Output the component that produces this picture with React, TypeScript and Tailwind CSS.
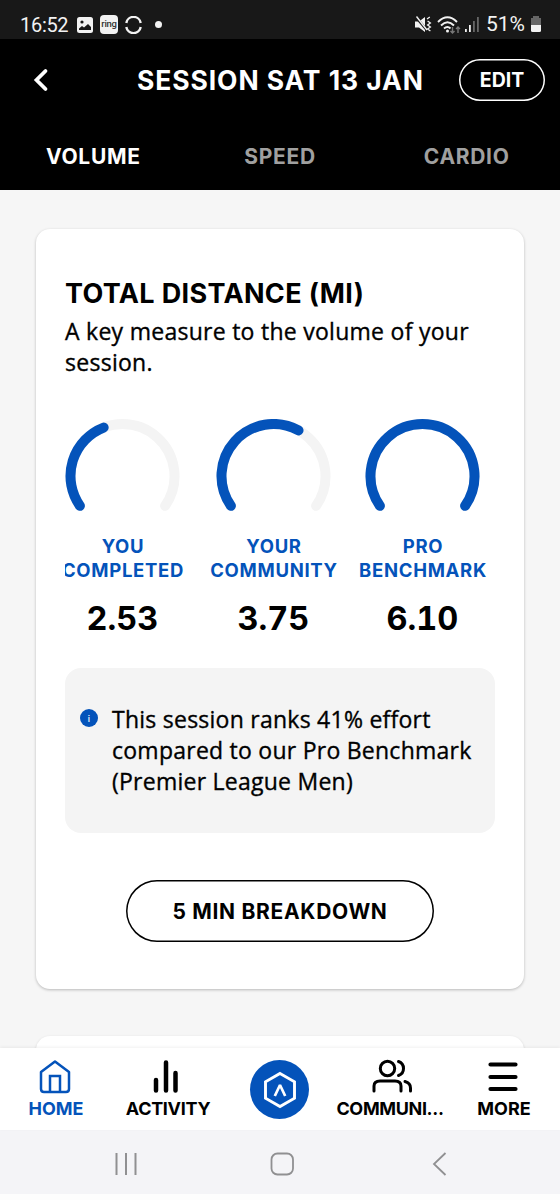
import type { ReactNode } from "react";

type GaugeProps = {
  label: [string, string];
  value: string;
  ratio: number;
  className?: string;
};

const RADIUS = 52;
const SWEEP = 250;
const START = 215;

function polar(deg: number) {
  const rad = (deg * Math.PI) / 180;
  return `${57.5 + RADIUS * Math.cos(rad)} ${57 - RADIUS * Math.sin(rad)}`;
}

function arc(ratio: number) {
  const sweep = SWEEP * ratio;
  const large = sweep > 180 ? 1 : 0;
  return `M${polar(START)} A${RADIUS} ${RADIUS} 0 ${large} 1 ${polar(START - sweep)}`;
}

function Gauge({ label, value, ratio, className = "" }: GaugeProps) {
  return (
    <div className={`flex w-[115px] shrink-0 flex-col items-center ${className}`}>
      <svg width="115" height="94" viewBox="0 0 115 94" fill="none" strokeWidth="10" strokeLinecap="round">
        <path d={arc(1)} stroke="#f4f4f4" />
        <path d={arc(ratio)} stroke="#0453ba" />
      </svg>
      <div className="mt-[21px] flex flex-col items-center pl-px text-[18.500px] leading-6 font-bold tracking-[0.7px] whitespace-nowrap text-[#0453ba]">
        <span>{label[0]}</span>
        <span>{label[1]}</span>
      </div>
      <div className="mt-[17px] text-[32.500px] leading-10 font-bold tabular-nums">{value}</div>
    </div>
  );
}

function StatusBar() {
  return (
    <div className="flex h-[39px] items-center bg-[#181818] pt-[10px] pl-[20px] font-['Roboto',sans-serif] text-[20px] leading-none text-[#f2f2f2]">
      <span className="w-[57px] tracking-[-0.3px]">16:52</span>
      <svg width="16" height="16" viewBox="0 0 16 16">
        <rect width="16" height="16" rx="2.5" fill="#f2f2f2" />
        <circle cx="5" cy="5" r="1.6" fill="#181818" />
        <path d="M2 13V11.500L5 9L7 10.500L11 7L14 10V13Z" fill="#181818" />
      </svg>
      <div className="ml-[7px] flex h-[19px] w-[18px] items-center justify-center rounded bg-[#f2f2f2] pb-px text-[9.500px] font-medium tracking-[-0.3px] text-[#333]">
        ring
      </div>
      <svg className="ml-[7px]" width="17" height="18" viewBox="0 0 17 18" fill="none" stroke="#f2f2f2" strokeWidth="2.4">
        <path d="M1.300 7A7.300 7.300 0 0 1 15.700 7" />
        <path d="M1.300 11A7.300 7.300 0 0 0 15.700 11" />
      </svg>
      <span className="ml-[13px] size-[7px] rounded-full bg-[#f2f2f2]" />

      <svg className="ml-[253px]" width="17" height="17" viewBox="0 0 17 17" fill="none">
        <path d="M0 5.500H4L10 1V16L4 11.500H0Z" fill="#f2f2f2" />
        <path d="M0.500 0.500L12.500 15" stroke="#181818" strokeWidth="2.6" />
        <path d="M1.500 0.500L12 14" stroke="#f2f2f2" strokeWidth="1.4" />
        <path d="M12 3L14.800 1M12.600 5L15.400 7L12.600 9L15.400 11L12.600 13L15.400 15" stroke="#f2f2f2" strokeWidth="1.3" />
      </svg>
      <svg className="ml-[5px]" width="25" height="18" viewBox="0 0 25 18" fill="none">
        <path d="M1 6Q10.500 -3.500 20 6M4 9.500Q10.500 3 17 9.500M7 12.500Q10.500 9.500 13.500 12.500" stroke="#f2f2f2" strokeWidth="1.9" />
        <circle cx="10.500" cy="15" r="1.5" fill="#f2f2f2" />
        <path d="M15.500 11V17M13.500 15L15.500 17L17.500 15M21 17V11M19 13L21 11L23 13" stroke="#777" strokeWidth="1.4" />
      </svg>
      <svg className="ml-[2px]" width="17" height="17" viewBox="0 0 17 17">
        <rect x="1" y="13" width="1.8" height="3" fill="#f2f2f2" />
        <rect x="5" y="9" width="1.8" height="7" fill="#f2f2f2" />
        <rect x="9" y="5" width="1.8" height="11" fill="#666" />
        <rect x="13" y="1" width="1.8" height="15" fill="#666" />
      </svg>
      <span className="ml-[5px] w-[44px] text-[21px]">51%</span>
      <svg width="12" height="17" viewBox="0 0 12 17">
        <path d="M3 0H9V2H11V9H1V2H3Z" fill="#666" />
        <path d="M1 9H11V14.500Q11 16 9.500 16H2.500Q1 16 1 14.500Z" fill="#f2f2f2" />
      </svg>
    </div>
  );
}

function NavItem({ label, children, className = "" }: { label: string; children: ReactNode; className?: string }) {
  return (
    <div className={`flex flex-col items-center ${className}`}>
      <div className="flex h-[35px] items-end">{children}</div>
      <span className="mt-[3px] text-[18px] leading-6 font-bold whitespace-nowrap">{label}</span>
    </div>
  );
}

function BottomNav() {
  return (
    <nav className="relative grid h-[82px] grid-cols-5 bg-white pt-[11px] shadow-[0_-1px_3px_rgba(0,0,0,0.06)]">
      <NavItem label="HOME" className="text-[#0453ba]">
        <svg className="mr-[3px]" width="32" height="35" viewBox="0 0 32 35" fill="none" stroke="currentColor" strokeWidth="2.500" strokeLinejoin="round">
          <path d="M2 13L16 2.500L30 13V30Q30 33 27 33H5Q2 33 2 30Z" />
          <path d="M11 33V17H21V33" strokeLinejoin="miter" />
        </svg>
      </NavItem>
      <NavItem label="ACTIVITY" className="tracking-[-0.3px]">
        <svg className="mr-[5px]" width="26" height="35" viewBox="0 0 26 35" stroke="currentColor" strokeWidth="4.500" strokeLinecap="round">
          <path d="M3 21V31.500M13 3.500V31.500M22.500 14V31.500" />
        </svg>
      </NavItem>
      <div className="flex justify-center">
        <div className="mt-px mr-px flex size-[59px] items-center justify-center rounded-full bg-[#0453ba]">
          <svg width="34" height="38" viewBox="0 0 34 38" fill="none" stroke="white" strokeWidth="2.9">
            <path d="M17 2.500L31.500 10.800V27.200L17 35.500L2.500 27.200V10.800Z" />
            <path d="M11.800 25L17 14L22.200 25" strokeWidth="2.7" strokeLinejoin="bevel" />
          </svg>
        </div>
      </div>
      <NavItem label="COMMUNI..." className="mr-1 tracking-[-0.35px]">
        <svg className="ml-[4px]" width="40" height="35" viewBox="0 0 40 35" fill="none" stroke="currentColor" strokeWidth="3" strokeLinecap="round">
          <circle cx="15.500" cy="9.500" r="7.200" />
          <path d="M2 32V27Q2 22 8 22H23Q29 22 29 27V32" />
          <path d="M26.500 2.500A7.400 7.400 0 0 1 26.500 16.500M33 22.500Q38.500 24 38.500 29V32" />
        </svg>
      </NavItem>
      <NavItem label="MORE">
        <svg className="mr-[3px] mb-[2px]" width="30" height="32" viewBox="0 0 30 32" stroke="currentColor" strokeWidth="4.200" strokeLinecap="round">
          <path d="M2.500 4.500H27.500M2.500 17H27.500M2.500 29H27.500" />
        </svg>
      </NavItem>
    </nav>
  );
}

function SystemNav() {
  return (
    <div className="flex h-16 items-center bg-[#f4f4f7] pt-[4px] text-[#909092]">
      <svg className="ml-[114px]" width="24" height="24" viewBox="0 0 24 24" stroke="currentColor" strokeWidth="2">
        <path d="M2.500 1V23M12 1V23M21.500 1V23" />
      </svg>
      <svg className="ml-[132px]" width="24" height="24" viewBox="0 0 24 24" fill="none" stroke="currentColor" strokeWidth="1.8">
        <rect x="1.500" y="1.500" width="21.500" height="21" rx="6" />
      </svg>
      <svg className="ml-[137px]" width="16" height="26" viewBox="0 0 16 26" fill="none" stroke="currentColor" strokeWidth="1.8">
        <path d="M14.500 2L3 13L14.500 24" />
      </svg>
    </div>
  );
}

export default function App() {
  return (
    <div className="flex h-[1200px] w-[560px] flex-col overflow-hidden bg-[#fdfdfd] font-['Inter',sans-serif] text-black">
      <StatusBar />
      <header className="h-[151px] bg-black text-white">
        <div className="flex h-[82px] items-center">
          <svg className="ml-[33px]" width="16" height="24" viewBox="0 0 16 24" fill="none" stroke="currentColor" strokeWidth="3.800" strokeLinecap="round">
            <path d="M12.500 3L3.500 12L12.500 21" />
          </svg>
          <h1 className="ml-[88px] w-[322px] pt-[2px] text-[26.500px] font-bold tracking-[0.9px] whitespace-nowrap">SESSION SAT 13 JAN</h1>
          <button className="flex h-[42px] w-[86px] shrink-0 items-center justify-center rounded-full pt-[2px] text-[19.500px] font-bold shadow-[inset_0_0_0_1.500px_white]">
            EDIT
          </button>
        </div>
        <div className="grid grid-cols-3 pt-[22px] text-center text-[21px] leading-7 font-bold tracking-[0.7px] text-[#a0a0a0]">
          <span className="text-white">VOLUME</span>
          <span>SPEED</span>
          <span>CARDIO</span>
        </div>
      </header>

      <main className="flex h-[858px] flex-col overflow-hidden bg-[#f6f6f6] px-9 pt-[39px]">
        <section className="h-[760px] shrink-0 rounded-[14px] bg-white px-[29px] pt-12 shadow-[0_1px_3px_rgba(0,0,0,0.25)]">
          <h2 className="text-[27px] leading-[34px] font-bold tracking-[0.350px] whitespace-nowrap">TOTAL DISTANCE (MI)</h2>
          <p className="mt-[5px] font-['Open_Sans',sans-serif] text-[23px] leading-[31px] font-medium tracking-[0.270px] whitespace-nowrap [-webkit-text-stroke:0.350px_black]">
            A key measure to the volume of your
            <br />
            session.
          </p>

          <div className="mt-[41px] flex overflow-hidden">
            <Gauge label={["YOU", "COMPLETED"]} value="2.53" ratio={0.415} />
            <Gauge label={["YOUR", "COMMUNITY"]} value="3.75" ratio={0.615} className="ml-[36px]" />
            <Gauge label={["PRO", "BENCHMARK"]} value="6.10" ratio={1} className="ml-[34px]" />
          </div>

          <div className="mt-[29px] flex h-[165px] rounded-2xl bg-[#f4f4f4] pt-[36px] pl-[15px]">
            <div className="mt-[5px] flex size-[18px] items-center justify-center rounded-full bg-[#0453ba] text-[9px] leading-none font-medium text-white">
              i
            </div>
            <p className="ml-[14px] font-['Open_Sans',sans-serif] text-[23px] leading-[31px] font-medium tracking-[0.250px] whitespace-nowrap [-webkit-text-stroke:0.350px_black]">
              This session ranks 41% effort
              <br />
              compared to our Pro Benchmark
              <br />
              (Premier League Men)
            </p>
          </div>

          <button className="mx-auto mt-[47px] flex h-[62px] w-[308px] items-center justify-center rounded-full pt-px text-[21px] font-bold tracking-[0.7px] shadow-[inset_0_0_0_1.500px_black]">
            5 MIN BREAKDOWN
          </button>
        </section>
        <section className="mt-[47px] h-40 shrink-0 rounded-[14px] bg-white shadow-[0_1px_3px_rgba(0,0,0,0.15)]" />
      </main>

      <BottomNav />
      <SystemNav />
    </div>
  );
}
